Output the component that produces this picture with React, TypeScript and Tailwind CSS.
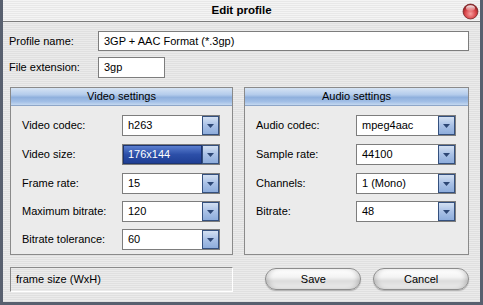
import React from "react";

const stripes =
  "bg-[repeating-linear-gradient(180deg,#ebebeb_0px,#ebebeb_1px,#e0e0e0_1px,#e0e0e0_2px)]";

function Arrow() {
  return (
    <div className="flex h-full w-[17px] shrink-0 items-center justify-center border border-[#34507e] bg-[linear-gradient(180deg,#d3e0f2_0%,#a9c1e6_50%,#8eaddc_100%)]">
      <svg width="7" height="4" viewBox="0 0 7 4">
        <path d="M0 0 L7 0 L3.5 4 Z" fill="#2d4775" />
      </svg>
    </div>
  );
}

function Combo({ value, selected }: { value: string; selected?: boolean }) {
  return (
    <div className="flex h-[21px] w-full border border-[#7d7d7d] bg-white">
      {selected ? (
        <div className="flex flex-1 items-center border border-[#1c3470] bg-[linear-gradient(180deg,#5b7fd0_0%,#2c4fa8_50%,#1f3f95_100%)] pl-[4px] text-white">
          {value}
        </div>
      ) : (
        <div className="flex flex-1 items-center pl-[5px]">{value}</div>
      )}
      <Arrow />
    </div>
  );
}

function Row({
  label,
  value,
  selected,
  mt,
}: {
  label: string;
  value: string;
  selected?: boolean;
  mt: string;
}) {
  return (
    <div className={`flex items-center ${mt}`}>
      <div className="w-[100px] shrink-0">{label}</div>
      <Combo value={value} selected={selected} />
    </div>
  );
}

function Panel({
  title,
  width,
  rows,
}: {
  title: string;
  width: string;
  rows: { label: string; value: string; selected?: boolean }[];
}) {
  const mts = ["mt-[9px]", "mt-[8px]", "mt-[8px]", "mt-[7px]", "mt-[7px]"];
  return (
    <div className={`${width} flex h-[168px] flex-col border border-[#8a8a8a] bg-[#ebebeb]`}>
      <div className="flex h-[18px] items-center justify-center border-b border-[#8ea6c8] bg-[linear-gradient(180deg,#d6e4f4_0%,#b3cbeb_40%,#8fb0dd_55%,#a2bfe6_80%,#c4d8f0_100%)]">
        {title}
      </div>
      <div className="flex flex-col pl-[11px] pr-[12px]">
        {rows.map((r, i) => (
          <Row key={r.label} label={r.label} value={r.value} selected={r.selected} mt={mts[i]} />
        ))}
      </div>
    </div>
  );
}

const btn =
  "flex h-[22px] w-[96px] items-center justify-center rounded-full border border-[#8c8c8c] bg-[linear-gradient(180deg,#ffffff_0%,#f4f4f4_40%,#dcdcdc_60%,#ececec_100%)] shadow-[inset_4px_0_5px_-2px_rgba(0,0,0,0.18),inset_-4px_0_5px_-2px_rgba(0,0,0,0.18),0_1px_1px_rgba(0,0,0,0.25)]";

export default function App() {
  return (
    <div className="flex h-[305px] w-[483px] flex-col bg-[#58606f] px-[3px] pb-[3px] font-['Liberation_Sans',Arial,sans-serif] text-[11px] text-black">
      <div className="relative flex h-[22px] shrink-0 items-center justify-center border-b border-[#7c7c7c] bg-[repeating-linear-gradient(180deg,#f4f4f4_0px,#f4f4f4_1px,#e8e8e8_1px,#e8e8e8_2px)] text-[11.5px] font-bold">
        Edit profile
        <svg
          className="absolute right-[1px] top-[3px]"
          width="17"
          height="17"
          viewBox="0 0 16 16"
        >
          <defs>
            <radialGradient id="rg" cx="50%" cy="65%" r="60%">
              <stop offset="0%" stopColor="#f7a0a0" />
              <stop offset="60%" stopColor="#d9464a" />
              <stop offset="100%" stopColor="#8e1a1e" />
            </radialGradient>
            <linearGradient id="hl" x1="0" y1="0" x2="0" y2="1">
              <stop offset="0%" stopColor="#ffffff" stopOpacity="0.95" />
              <stop offset="100%" stopColor="#ffffff" stopOpacity="0.1" />
            </linearGradient>
          </defs>
          <circle cx="8" cy="8" r="7" fill="url(#rg)" stroke="#7a2a2c" strokeWidth="0.8" />
          <ellipse cx="8" cy="4.8" rx="4.3" ry="2.8" fill="url(#hl)" />
        </svg>
      </div>
      <div className={`flex flex-1 flex-col pl-[6px] pr-[11px] pt-[9px] ${stripes}`}>
        <div className="flex items-center">
          <div className="w-[89px] shrink-0">Profile name:</div>
          <div className="flex h-[20px] flex-1 items-center border border-[#7d7d7d] bg-white pl-[5px]">
            3GP + AAC Format (*.3gp)
          </div>
        </div>
        <div className="mt-[6px] flex items-center">
          <div className="w-[89px] shrink-0">File extension:</div>
          <div className="flex h-[21px] w-[67px] items-center border border-[#7d7d7d] bg-white pl-[5px]">
            3gp
          </div>
        </div>
        <div className="ml-[1px] mt-[9px] flex gap-[11px]">
          <Panel
            title="Video settings"
            width="w-[224px]"
            rows={[
              { label: "Video codec:", value: "h263" },
              { label: "Video size:", value: "176x144", selected: true },
              { label: "Frame rate:", value: "15" },
              { label: "Maximum bitrate:", value: "120" },
              { label: "Bitrate tolerance:", value: "60" },
            ]}
          />
          <Panel
            title="Audio settings"
            width="w-[226px]"
            rows={[
              { label: "Audio codec:", value: "mpeg4aac" },
              { label: "Sample rate:", value: "44100" },
              { label: "Channels:", value: "1 (Mono)" },
              { label: "Bitrate:", value: "48" },
            ]}
          />
        </div>
        <div className="ml-[1px] mt-[12px] flex items-start">
          <div className="flex h-[25px] w-[224px] items-center border border-b-white border-l-[#8a8a8a] border-r-white border-t-[#8a8a8a] pl-[5px]">
            frame size (WxH)
          </div>
          <button className={`ml-[32px] mt-[1px] ${btn}`}>Save</button>
          <button className={`ml-[12px] mt-[1px] ${btn}`}>Cancel</button>
        </div>
      </div>
    </div>
  );
}
